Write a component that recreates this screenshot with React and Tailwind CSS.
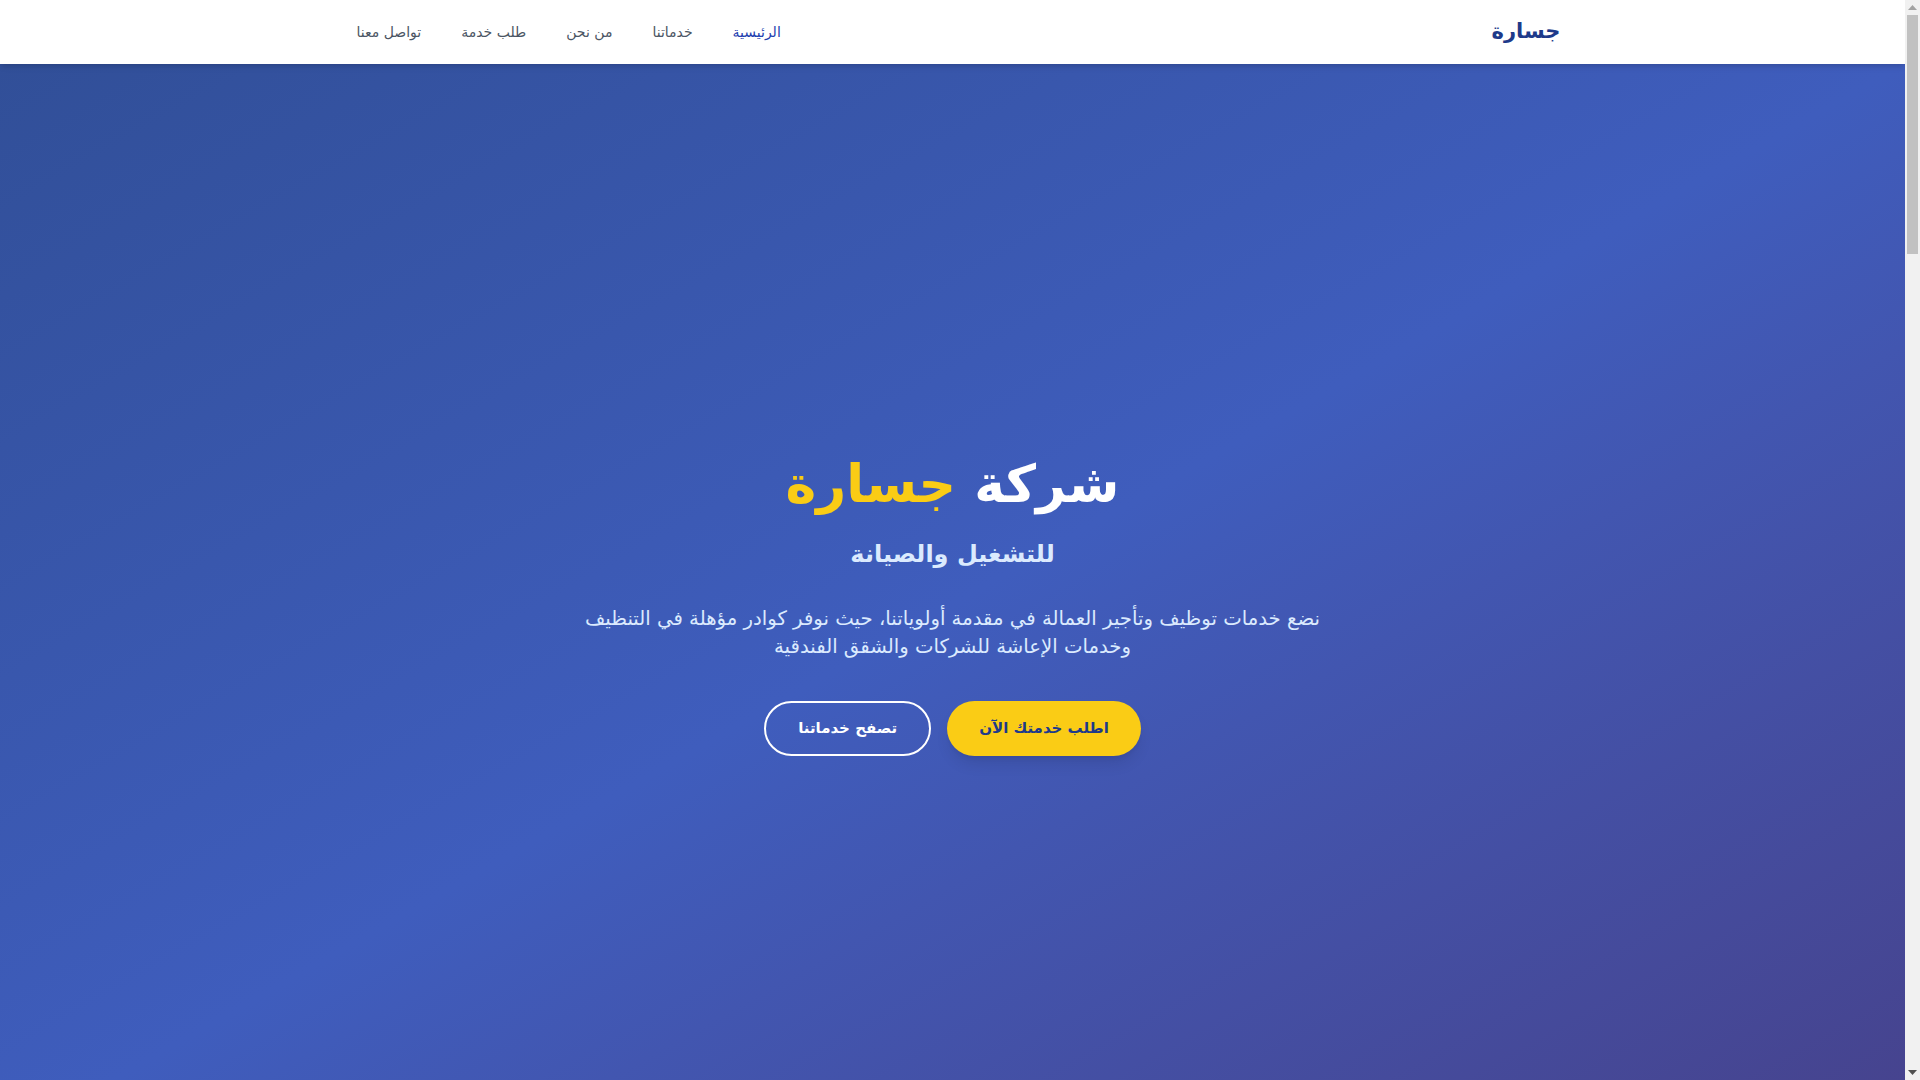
import React from "react";

const font = { fontFamily: '"DejaVu Sans", "Noto Sans", sans-serif' };

function Header() {
  const links = [
    { label: "الرئيسية", active: true },
    { label: "خدماتنا" },
    { label: "من نحن" },
    { label: "طلب خدمة" },
    { label: "تواصل معنا" },
  ];
  return (
    <header className="relative z-20 bg-white shadow-md">
      <div className="mx-auto flex h-16 max-w-7xl items-center justify-between px-8">
        <a className="text-[21px] font-bold text-[#1e3a8a]">جسارة</a>
        <nav className="flex items-center gap-4">
          {links.map((l) => (
            <a
              key={l.label}
              className={
                "px-3 text-[14px] " +
                (l.active ? "text-[#1e40af]" : "text-[#4b5563]")
              }
            >
              {l.label}
            </a>
          ))}
        </nav>
      </div>
    </header>
  );
}

function Hero() {
  return (
    <section className="flex h-[1080px] items-center justify-center bg-gradient-to-br from-[#314f98] via-[#3f5dbd] to-[#46428c] px-8">
      <div className="mx-auto flex max-w-3xl flex-col items-center text-center">
        <h1 className="text-[52px] font-bold leading-[64px] text-white">
          شركة <span className="text-[#facc15]">جسارة</span>
        </h1>
        <h2 className="mt-[22px] text-2xl font-bold leading-8 text-[#dbeafe]">
          للتشغيل والصيانة
        </h2>
        <p className="mt-[35px] text-[19.7px] leading-7 text-[#dbeafe]">
          نضع خدمات توظيف وتأجير العمالة في مقدمة أولوياتنا، حيث نوفر كوادر مؤهلة في التنظيف
          وخدمات الإعاشة للشركات والشقق الفندقية
        </p>
        <div className="mt-10 flex items-center gap-4">
          <a className="flex h-[55px] items-center rounded-full bg-[#facc15] px-8 text-[15px] font-bold text-[#1e3a8a] shadow-lg">
            اطلب خدمتك الآن
          </a>
          <a className="flex h-[55px] items-center rounded-full border-2 border-white px-8 text-[15px] font-bold text-white">
            تصفح خدماتنا
          </a>
        </div>
      </div>
    </section>
  );
}

function Scrollbar() {
  return (
    <div className="flex h-screen w-[15px] shrink-0 flex-col bg-[#f1f1f1]">
      <div className="flex h-[15px] items-center justify-center">
        <svg width="9" height="5" viewBox="0 0 9 5">
          <polygon points="4.5,0 9,5 0,5" fill="#a3a3a3" />
        </svg>
      </div>
      <div className="flex-1 px-[2px]">
        <div className="h-[239px] w-full bg-[#c1c1c1]" />
      </div>
      <div className="flex h-[15px] items-center justify-center">
        <svg width="9" height="5" viewBox="0 0 9 5">
          <polygon points="0,0 9,0 4.5,5" fill="#505050" />
        </svg>
      </div>
    </div>
  );
}

export default function App() {
  return (
    <div style={font} className="flex h-screen overflow-hidden bg-white">
      <div dir="rtl" className="h-screen min-w-0 flex-1 overflow-hidden">
        <Header />
        <Hero />
        <div className="h-[3600px] bg-gray-50" />
      </div>
      <Scrollbar />
    </div>
  );
}
